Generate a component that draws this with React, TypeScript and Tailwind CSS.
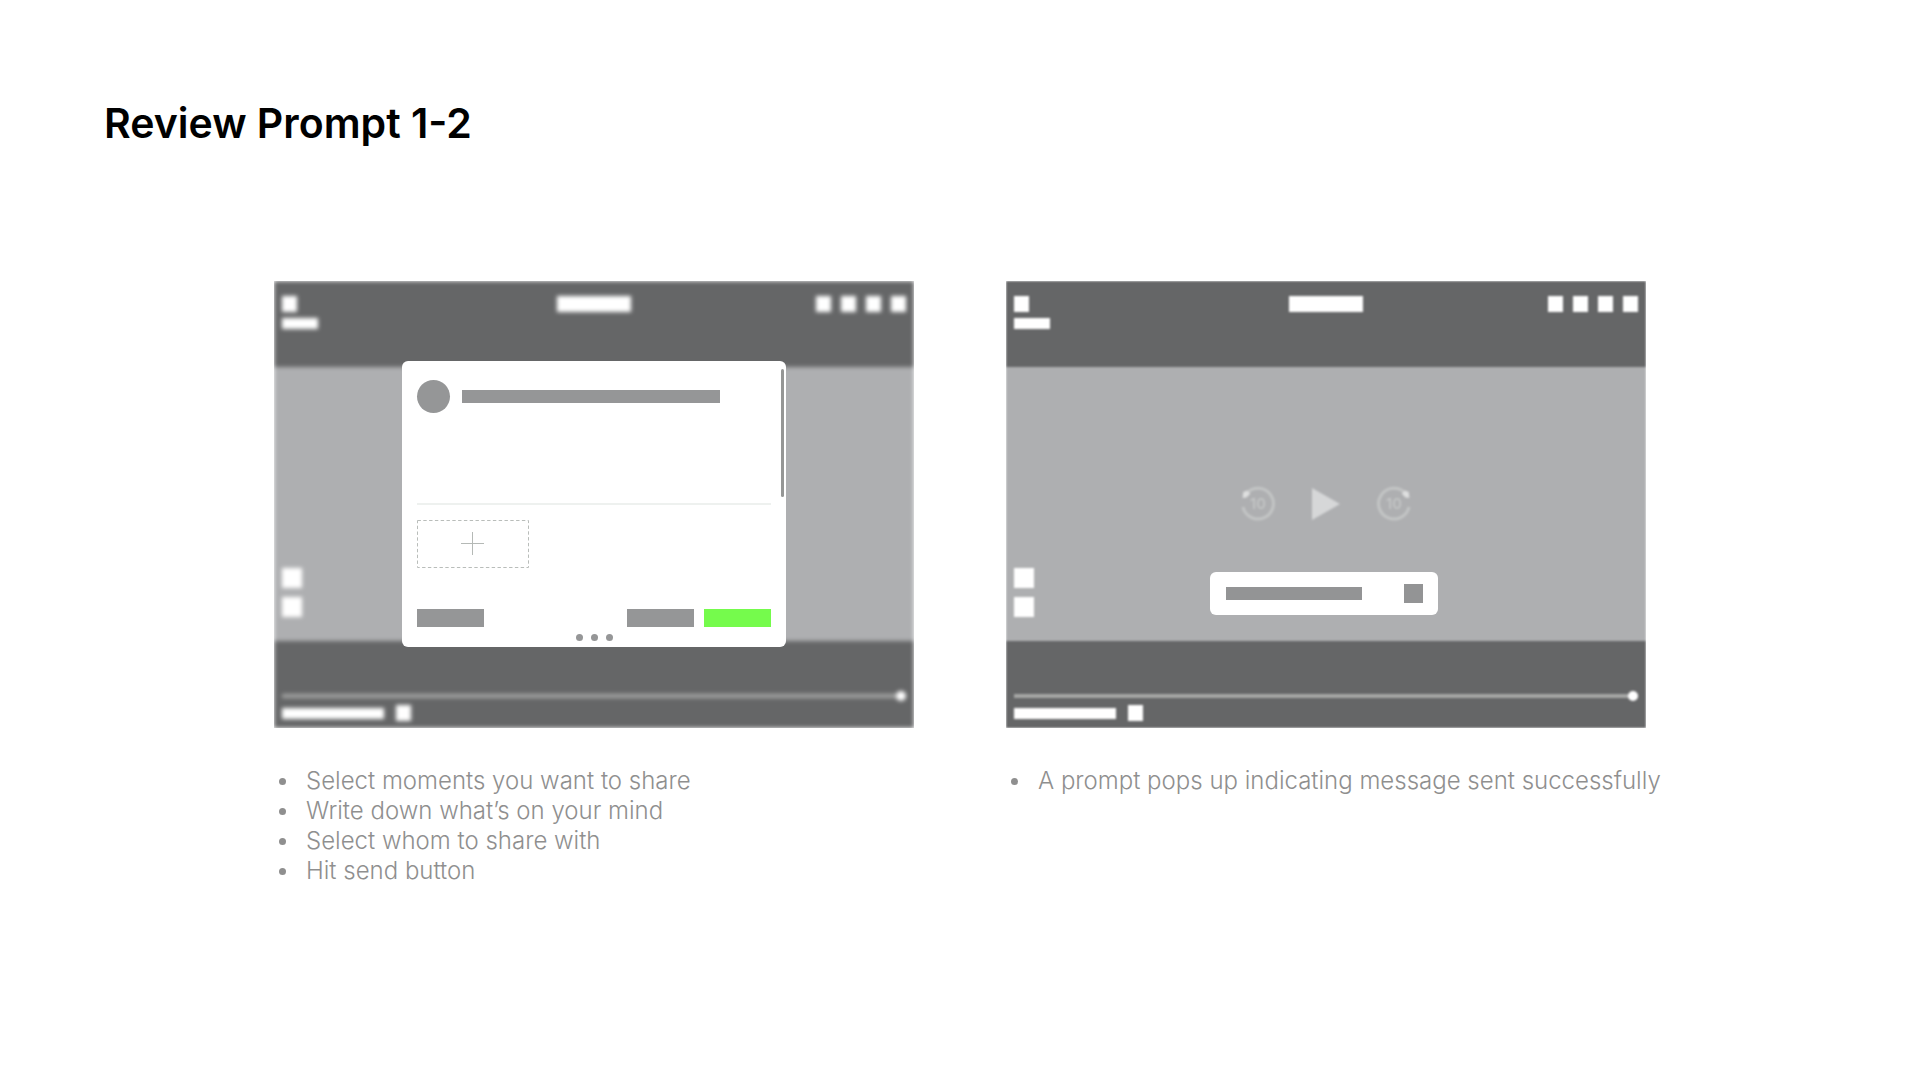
import type { ReactNode } from "react";

function Skip({ forward = false }: { forward?: boolean }) {
  return (
    <button type="button" aria-label={forward ? "Forward 10 seconds" : "Back 10 seconds"}>
      <svg width="36" height="36" viewBox="0 0 36 36" aria-hidden="true">
        <g transform={forward ? "translate(36 0) scale(-1 1)" : undefined}>
          <path
            d="M7 6.8A15.4 15.4 0 1 1 3 21"
            fill="none"
            stroke="#c3c5c5"
            strokeWidth="3"
          />
          <path d="M2.6 12L3.2 6L7 4.4L10.4 7.4L6.6 11.6Z" fill="#dedfdf" />
        </g>
        <text
          x="18"
          y="23"
          textAnchor="middle"
          fill="#c6c8c8"
          className="font-['Inter'] text-[15px] font-medium"
        >
          10
        </text>
      </svg>
    </button>
  );
}

function Player({ name, controls, children }: { name: string; controls?: boolean; children: ReactNode }) {
  return (
    <div className="relative">
      <div className="overflow-hidden">
        <div className={`flex flex-col bg-[#aeafb1] ${controls ? "blur-[1px]" : "blur-[2px]"}`}>
          <div className="grid h-[86px] grid-cols-3 items-start bg-[#656667] px-2 pt-[15px]">
            <div className="flex flex-col items-start gap-1.5">
              <button type="button" aria-label="Back" className="h-4 w-[15px] bg-white" />
              <div className="h-[11px] w-9 bg-white" />
            </div>
            <div className="h-4 w-[74px] justify-self-center bg-white" />
            <div className="flex justify-end gap-2.5">
              <button type="button" aria-label="Cast" className="h-4 w-[15px] bg-white" />
              <button type="button" aria-label="Share" className="h-4 w-[15px] bg-white" />
              <button type="button" aria-label="Settings" className="h-4 w-[15px] bg-white" />
              <button type="button" aria-label="More" className="h-4 w-[15px] bg-white" />
            </div>
          </div>
          <div className="grid h-[274px] grid-cols-3 items-center px-2">
            <div className="flex flex-col gap-[9px] self-end pb-6">
              <button type="button" aria-label="Like" className="size-5 bg-white" />
              <button type="button" aria-label="Comment" className="size-5 bg-white" />
            </div>
            {controls && (
              <div className="flex items-center justify-center gap-9">
                <Skip />
                <button type="button" aria-label="Play">
                  <svg width="28" height="32" viewBox="0 0 28 32" aria-hidden="true">
                    <path d="M0 0L28 16L0 32Z" fill="#d6d7d8" />
                  </svg>
                </button>
                <Skip forward />
              </div>
            )}
          </div>
          <div className="flex h-[87px] flex-col justify-end gap-[3px] bg-[#656667] px-2 pb-[7px]">
            <input
              type="range"
              aria-label={`${name} position`}
              defaultValue={100}
              className="h-3 w-full appearance-none bg-transparent [&::-webkit-slider-runnable-track]:h-1 [&::-webkit-slider-runnable-track]:bg-[#a5a6a5] [&::-webkit-slider-thumb]:-mt-[3px] [&::-webkit-slider-thumb]:size-2.5 [&::-webkit-slider-thumb]:appearance-none [&::-webkit-slider-thumb]:rounded-full [&::-webkit-slider-thumb]:bg-white"
            />
            <div className="flex items-center gap-3">
              <div className="h-[11px] w-[102px] bg-white" />
              <button type="button" aria-label="Full screen" className="h-4 w-[15px] bg-white" />
            </div>
          </div>
        </div>
      </div>
      {children}
    </div>
  );
}

function ShareDialog() {
  return (
    <div className="absolute inset-0 flex items-center justify-center pb-0.5">
      <div
        role="dialog"
        aria-label="Share moments"
        className="relative flex h-[286px] w-[384px] flex-col rounded-md bg-white px-[15px] pt-[19px]"
      >
        <div className="flex items-center gap-3">
          <div className="size-[33px] rounded-full bg-[#959697]" />
          <div className="h-[13px] w-[258px] bg-[#959697]" />
        </div>
        <div className="mt-[90px] h-0.5 bg-[#eef1ef]" />
        <button type="button" aria-label="Add moment" className="mt-[15px] h-12 w-28">
          <svg width="112" height="48" viewBox="0 0 112 48" fill="none" aria-hidden="true">
            <rect x="0.5" y="0.5" width="111" height="47" stroke="#b9bdba" strokeDasharray="3.4 2.4" />
            <path d="M44 23.5H67M55.5 12V35" stroke="#b5b9b6" />
          </svg>
        </button>
        <div className="mt-[41px] flex">
          <button type="button" aria-label="Recipients" className="h-[18px] w-[67px] bg-[#959697]" />
          <button type="button" aria-label="Cancel" className="mr-2.5 ml-auto h-[18px] w-[67px] bg-[#959697]" />
          <button type="button" aria-label="Send" className="h-[18px] w-[67px] bg-[#75fb4c]" />
        </div>
        <div className="mt-[7px] flex justify-center gap-2">
          <span className="size-[7px] rounded-full bg-[#959697]" />
          <span className="size-[7px] rounded-full bg-[#959697]" />
          <span className="size-[7px] rounded-full bg-[#959697]" />
        </div>
        <div className="absolute top-2 right-[2px] h-32 w-[3px] rounded-full bg-[#959695]" />
      </div>
    </div>
  );
}

function SentToast() {
  return (
    <div className="absolute inset-x-0 bottom-[113px] flex justify-center">
      <div
        role="status"
        aria-label="Message sent"
        className="mr-1 flex h-[43px] w-[228px] items-center justify-between rounded-md bg-white pr-[15px] pl-4"
      >
        <div className="h-[13px] w-[136px] bg-[#939495]" />
        <button type="button" aria-label="Dismiss" className="size-[19px] bg-[#939495]" />
      </div>
    </div>
  );
}

function Notes({ items }: { items: string[] }) {
  return (
    <ul className="mt-[38px] flex flex-col pl-[5px] text-2xl leading-[30px] font-light whitespace-nowrap text-[#8f8f8f]">
      {items.map((item) => (
        <li key={item} className="flex items-center gap-5">
          <span className="size-[7px] shrink-0 rounded-full bg-[#8f8f8f]" />
          {item}
        </li>
      ))}
    </ul>
  );
}

export default function App() {
  return (
    <main className="min-h-screen bg-white font-['Inter',sans-serif]">
      <h1 className="px-[104px] pt-[98px] text-[41px] leading-[50px] font-semibold text-black">Review Prompt 1-2</h1>
      <div className="mx-auto mt-[133px] grid max-w-[1372px] grid-cols-2 gap-[92px]">
        <section>
          <Player name="Share moments">
            <ShareDialog />
          </Player>
          <Notes
            items={[
              "Select moments you want to share",
              "Write down what’s on your mind",
              "Select whom to share with",
              "Hit send button",
            ]}
          />
        </section>
        <section>
          <Player name="Message sent" controls>
            <SentToast />
          </Player>
          <Notes items={["A prompt pops up indicating message sent successfully"]} />
        </section>
      </div>
    </main>
  );
}
